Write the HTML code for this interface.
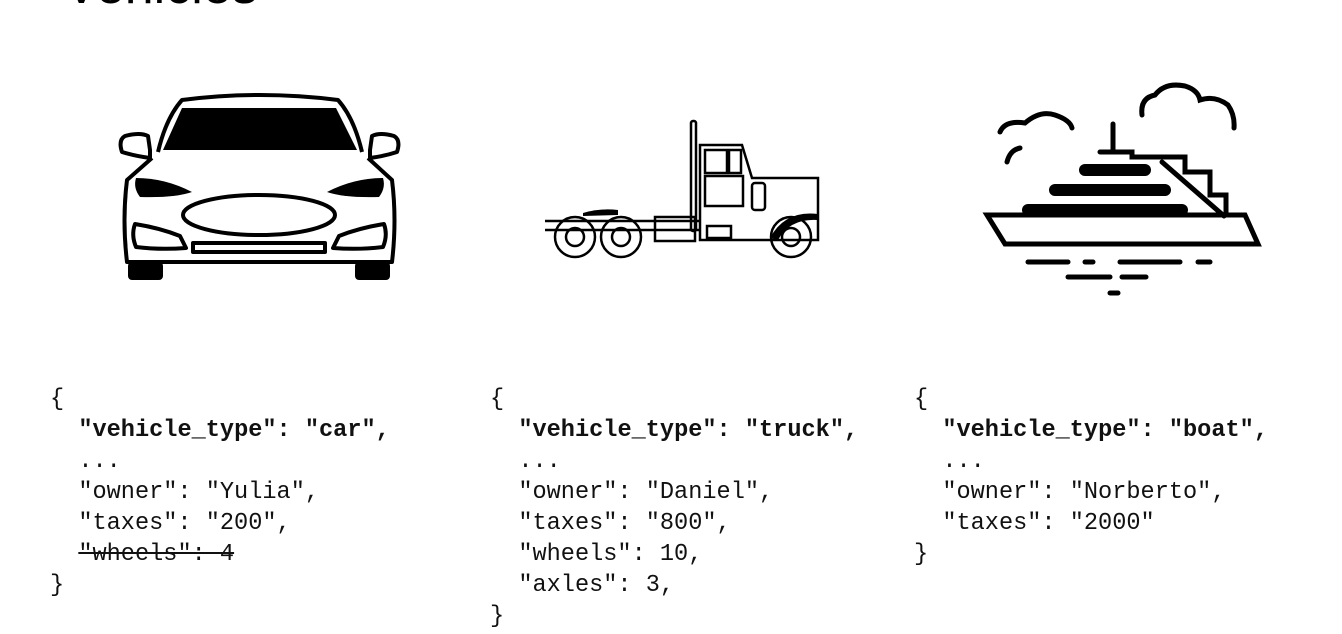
<!DOCTYPE html>
<html><head><style>
body{margin:0;width:1342px;height:634px;background:#fff;position:relative;overflow:hidden;font-family:"Liberation Sans",sans-serif}
.t{position:absolute;left:64px;top:-40px;font-size:52px;line-height:52px;color:#000}
.c{position:absolute;font-family:"Liberation Mono",monospace;font-size:23.6px;line-height:31px;color:#111;white-space:pre;margin:0}
.c b{font-weight:bold}
svg{position:absolute;left:0;top:0}
</style></head><body>
<div class="t">Vehicles</div>
<svg width="1342" height="634" viewBox="0 0 1342 634">
<g fill="none" stroke="#000" stroke-width="4" stroke-linejoin="round">
<path d="M158 152 Q166 118 182 100 Q260 90 338 100 Q354 118 362 152"/>
<path d="M152 158 L127 180 Q122 220 127 262 L392 262 Q397 220 392 180 L368 158"/>
<path d="M150 158 Q135 156 122 152 Q118 140 125 136 Q140 132 148 136 L150 150 Z"/>
<path d="M370 158 Q385 156 397 152 Q401 140 394 136 Q380 132 372 136 L370 150 Z"/>
<ellipse cx="259" cy="215" rx="76" ry="20"/>
<path d="M135 224 Q160 228 180 236 L186 248 Q160 250 136 247 Q131 235 135 224 Z"/>
<path d="M384 224 Q359 228 339 236 L333 248 Q359 250 383 247 Q388 235 384 224 Z"/>
<rect x="193" y="243" width="132" height="9"/>
</g>
<path d="M163 150 L182 108 L336 108 L357 150 Z" fill="#000"/>
<path d="M136 178 Q165 178 192 192 Q175 198 140 197 Q133 188 136 178 Z" fill="#000"/>
<path d="M383 178 Q354 178 327 192 Q344 198 379 197 Q386 188 383 178 Z" fill="#000"/>
<rect x="128" y="262" width="35" height="18" rx="4" fill="#000"/>
<rect x="355" y="262" width="35" height="18" rx="4" fill="#000"/>
<g fill="none" stroke="#000" stroke-width="2.5">
<rect x="691" y="121" width="5" height="110" rx="2"/>
<path d="M700 145 L742 145 L752 178 L818 178 L818 240 L700 240 Z"/>
<rect x="705" y="150" width="22" height="23"/><rect x="729" y="150" width="12" height="23"/>
<path d="M705 176 L743 176 L743 206 L705 206 Z"/>
<rect x="752" y="183" width="13" height="27" rx="3"/>
<path d="M545 221 L700 221 M545 230 L700 230"/>
<rect x="655" y="217" width="40" height="24"/>
<rect x="707" y="226" width="24" height="12"/>
<circle cx="575" cy="237" r="20"/><circle cx="621" cy="237" r="20"/><circle cx="791" cy="237" r="20"/>
<circle cx="575" cy="237" r="9"/><circle cx="621" cy="237" r="9"/><circle cx="791" cy="237" r="9"/>
</g>
<path d="M583 213 Q600 208 618 210 L618 215 L583 216 Z" fill="#000"/>
<path d="M770 238 Q785 210 818 214 L818 220 Q790 218 778 240 Z" fill="#000"/>
<g fill="none" stroke="#000" stroke-width="5" stroke-linecap="round" stroke-linejoin="miter">
<path d="M987 215 L1245 215 L1258 244 L1005 244 Z"/>
<path d="M1000 132 Q1005 120 1025 123 Q1040 110 1055 115 Q1070 120 1072 128"/>
<path d="M1007 162 Q1010 150 1020 148"/>
<path d="M1142 115 Q1140 98 1155 95 Q1165 82 1185 86 Q1198 90 1200 100 Q1215 95 1228 105 Q1235 115 1234 128"/>
<path d="M1113 124 L1113 152"/>
<path d="M1100 152 L1132 152 L1132 157 L1185 157 L1185 172 L1210 172 L1210 195 L1226 195 L1226 215"/>
<path d="M1162 162 L1224 216"/>
</g>
<g stroke="#000" stroke-width="12" stroke-linecap="round">
<line x1="1028" y1="210" x2="1182" y2="210"/>
<line x1="1055" y1="190" x2="1165" y2="190"/>
<line x1="1085" y1="170" x2="1145" y2="170"/>
</g>
<g stroke="#000" stroke-width="5" stroke-linecap="round">
<line x1="1028" y1="262" x2="1068" y2="262"/><line x1="1085" y1="262" x2="1093" y2="262"/>
<line x1="1120" y1="262" x2="1180" y2="262"/><line x1="1198" y1="262" x2="1210" y2="262"/>
<line x1="1068" y1="277" x2="1110" y2="277"/><line x1="1122" y1="277" x2="1146" y2="277"/>
<line x1="1110" y1="293" x2="1118" y2="293"/>
</g>
</svg>
<pre class="c" style="left:50px;top:384px">{
  <b>"vehicle_type": "car",</b>
  ...
  "owner": "Yulia",
  "taxes": "200",
  <s>"wheels": 4</s>
}</pre>
<pre class="c" style="left:490px;top:384px">{
  <b>"vehicle_type": "truck",</b>
  ...
  "owner": "Daniel",
  "taxes": "800",
  "wheels": 10,
  "axles": 3,
}</pre>
<pre class="c" style="left:914px;top:384px">{
  <b>"vehicle_type": "boat",</b>
  ...
  "owner": "Norberto",
  "taxes": "2000"
}</pre>
</body></html>
